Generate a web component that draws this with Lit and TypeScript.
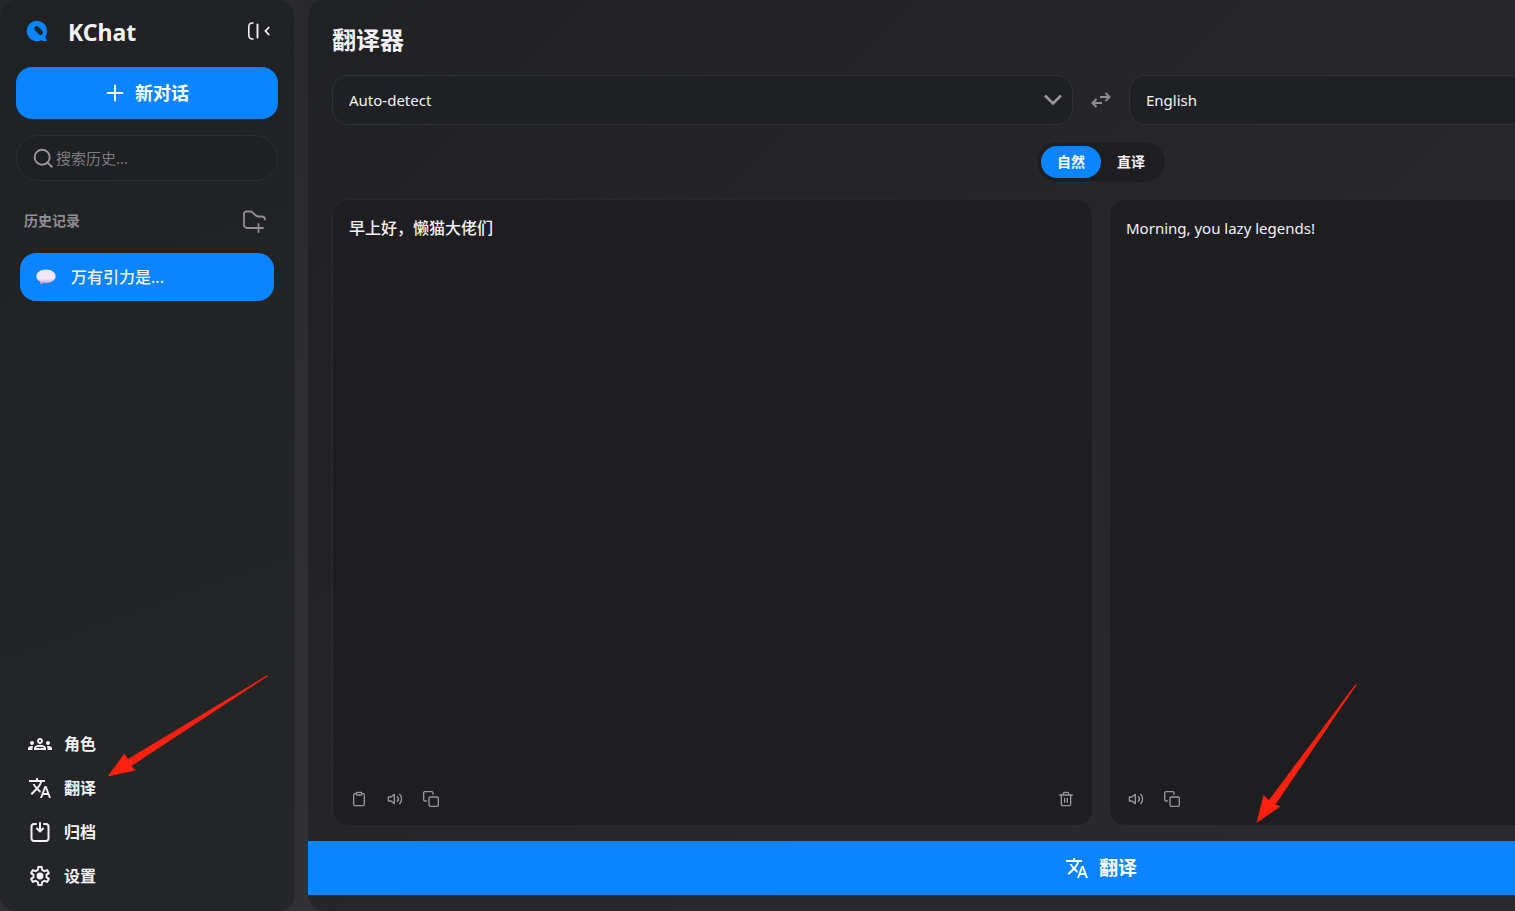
import { LitElement, html, css, svg, TemplateResult } from "lit";
import { customElement, property, state } from "lit/decorators.js";
import { classMap } from "lit/directives/class-map.js";

const line = (body: TemplateResult, size: number, width = 2) => html`
  <svg width=${size} height=${size} viewBox="0 0 24 24" fill="none" stroke="currentColor"
    stroke-width=${width} stroke-linecap="round" stroke-linejoin="round" aria-hidden="true">${body}</svg>`;

const solid = (body: TemplateResult, size: number) => html`
  <svg width=${size} height=${size} viewBox="0 0 24 24" fill="currentColor" aria-hidden="true">${body}</svg>`;

const icons = {
  logo: html`<svg width="22" height="22" viewBox="0 0 22 22" aria-hidden="true">
    <path fill="#0a84ff" d="M11 .8a10.200 10.200 0 1 0 4.300 19.400c1.800.9 3.700 1.100 5.400.6.500-.2.500-.8.100-1.100-.9-.8-1.400-2-1.300-3.400A10.200 10.200 0 0 0 11 .8Z"/>
    <path fill="none" stroke="#212224" stroke-width="4.600" stroke-linecap="round" d="M10.600 8.500l4 4"/></svg>`,
  collapse: html`<svg width="24" height="18" viewBox="0 0 24 18" fill="none" stroke="currentColor" stroke-width="1.600" stroke-linecap="round" aria-hidden="true">
    <path d="M6 1H5.500C3 1 1.800 2.500 1.800 5v8c0 2.500 1.200 4 3.700 4H6"/><path stroke-width="1.900" d="M10.500 2.500v13"/><path stroke-width="1.800" d="M21.700 5.500L18.500 9l3.200 3.500"/></svg>`,
  plus: line(svg`<path d="M12 3v18M3 12h18"/>`, 20, 2.2),
  search: line(svg`<circle cx="11" cy="11" r="9"/><path d="M17.500 17.500l5 5"/>`, 20, 2.3),
  folder: line(svg`<path d="M12.500 19H5a3 3 0 0 1-3-3V5a2.500 2.500 0 0 1 2.500-2.500h4.200c2.600 0 3.600 4.500 7.300 5h3.500c1.700 0 3.500.8 3.500 3M16.500 15v8M12.500 19h8.500"/>`, 24, 1.8),
  roles: solid(svg`<path d="M4 13c1.100 0 2-.9 2-2s-.9-2-2-2-2 .9-2 2 .9 2 2 2zm1.130 1.100c-.37-.06-.74-.1-1.130-.1-.99 0-1.930.21-2.780.58A2.010 2.010 0 0 0 0 16.430V18h4.500v-1.610c0-.83.23-1.610.63-2.290zM20 13c1.100 0 2-.9 2-2s-.9-2-2-2-2 .9-2 2 .9 2 2 2zm4 3.430c0-.81-.48-1.530-1.220-1.850a6.950 6.950 0 0 0-3.910-.48c.4.680.63 1.460.63 2.290V18H24v-1.570zm-7.760-2.780A10.500 10.500 0 0 0 12 12.750c-1.630 0-3.070.39-4.240.9A2.990 2.990 0 0 0 6 16.390V18h12v-1.610c0-1.180-.68-2.260-1.760-2.740zM8.070 16c.09-.23.13-.39.91-.69.97-.38 1.990-.56 3.020-.56s2.050.18 3.020.56c.77.3.81.46.91.69H8.070zM12 8c.55 0 1 .45 1 1s-.45 1-1 1-1-.45-1-1 .45-1 1-1m0-2c-1.660 0-3 1.340-3 3s1.340 3 3 3 3-1.340 3-3-1.340-3-3-3z"/>`, 24),
  translate: solid(svg`<path d="M12.870 15.070l-2.540-2.510.03-.03c1.740-1.940 2.980-4.170 3.710-6.530H17V4h-7V2H8v2H1v1.990h11.170C11.500 7.920 10.440 9.750 9 11.350 8.070 10.320 7.300 9.190 6.690 8h-2c.73 1.630 1.730 3.170 2.980 4.560l-5.090 5.020L4 19l5-5 3.110 3.110.76-2.040zM18.500 10h-2L12 22h2l1.120-3h4.750L21 22h2l-4.500-12zm-2.620 7l1.620-4.330L19.120 17h-3.240z"/>`, 24),
  archive: line(svg`<path d="M8 4H6a2.500 2.500 0 0 0-2.500 2.500v12A2.500 2.500 0 0 0 6 21h12a2.500 2.500 0 0 0 2.500-2.500v-12A2.500 2.500 0 0 0 18 4h-2M12 3v8M9 8.500l3 3 3-3"/>`, 24, 2),
  settings: html`<svg width="24" height="24" viewBox="0 0 24 24" fill="none" stroke="currentColor" stroke-width="2" stroke-linejoin="round" aria-hidden="true">
    <path d="M10.300 3h3.400l.5 3 2.100 1.200 2.800-1.100 1.700 3-2.300 1.800v2.200l2.300 1.800-1.700 3-2.800-1.100-2.100 1.200-.5 3h-3.400l-.5-3-2.100-1.200-2.800 1.100-1.700-3 2.300-1.800v-2.200L3.200 9.100l1.700-3 2.800 1.100 2.100-1.200Z"/><circle cx="12" cy="12" r="2.400" fill="currentColor"/></svg>`,
  swap: html`<svg width="22" height="18" viewBox="0 0 22 18" fill="none" stroke="currentColor" stroke-width="2" aria-hidden="true">
    <path d="M10 6h9.500M15.500 2l4 4-4 4M12 12H2.500M6.500 8l-4 4 4 4"/></svg>`,
  chevron: html`<svg width="20" height="12" viewBox="0 0 20 12" fill="none" stroke="currentColor" stroke-width="2.600" aria-hidden="true"><path d="M2 1.500l8 8 8-8"/></svg>`,
  paste: line(svg`<rect x="8" y="2" width="8" height="4" rx="1"/><path d="M16 4h2a2 2 0 0 1 2 2v14a2 2 0 0 1-2 2H6a2 2 0 0 1-2-2V6a2 2 0 0 1 2-2h2"/>`, 16, 2),
  speak: line(svg`<path d="M11 5L6 9H2v6h4l5 4zM15.500 8.500a5 5 0 0 1 0 7M19 5a10 10 0 0 1 0 14"/>`, 16, 2),
  copy: line(svg`<rect x="9" y="9" width="14" height="14" rx="2"/><path d="M5 15H3a2 2 0 0 1-2-2V3a2 2 0 0 1 2-2h10a2 2 0 0 1 2 2v2"/>`, 16, 2),
  trash: line(svg`<path d="M2.500 6h19M19 6v14a2 2 0 0 1-2 2H7a2 2 0 0 1-2-2V6M8 6V4a2 2 0 0 1 2-2h4a2 2 0 0 1 2 2v2M10 11v6M14 11v6"/>`, 16, 2),
  bubble: html`<svg width="20" height="16" viewBox="0 0 20 16" aria-hidden="true">
    <defs><linearGradient id="b" x1="0" y1="0" x2="0" y2="1"><stop offset="0" stop-color="#f0e4f6"/><stop offset=".6" stop-color="#f1e8f6"/><stop offset="1" stop-color="#b98bc4"/></linearGradient></defs>
    <path fill="url(#b)" d="M10 .5c5.400 0 9.600 2.900 9.600 6.700S15.400 14 10 14c-1 0-2-.1-3-.3-.4.900-1.400 1.600-3 1.900.5-.8.600-1.800.2-2.900C1.900 11.400.4 9.500.4 7.200.4 3.400 4.600.5 10 .5Z"/></svg>`,
};

const base = css`
  * { box-sizing: border-box; }
  button, select, input, textarea { font: inherit; color: inherit; margin: 0; border: 0; background: none; padding: 0; outline: none; }
  button { cursor: pointer; }
  svg { display: block; flex: none; }
`;

@customElement("chat-sidebar")
class ChatSidebar extends LitElement {
  static styles = [base, css`
    :host {
      box-sizing: border-box; display: flex; flex-direction: column; flex: none; width: 295px; padding: 0 16px 13px;
      border-right: 1px solid #2b2c2e; border-radius: 16px;
      background: linear-gradient(160deg, #202123, #252628);
    }
    .brand { display: flex; align-items: center; height: 67px; padding: 0 7px 6px 10px; }
    .brand h1 { margin: 0 auto 0 20px; padding-top: 3px; font-size: 23px; line-height: 32px; font-weight: 700; }
    .new {
      display: flex; align-items: center; justify-content: center; gap: 10px; height: 52px; flex: none;
      border-radius: 16px; background: #0a84ff; color: #fff; font-size: 18px; font-weight: 700;
    }
    .search {
      display: flex; align-items: center; gap: 3px; height: 46px; margin-top: 16px; padding: 0 16px; flex: none;
      border: 1px solid #2d2e30; border-radius: 23px; background: #1f2022; color: #98989d;
    }
    .search input { flex: 1; min-width: 0; font-size: 15px; }
    .search input::placeholder { color: #7c7c80; opacity: 1; }
    .heading { display: flex; align-items: center; justify-content: space-between; height: 48px; margin-top: 16px; padding: 0 12px 0 8px; color: #8e8e93; }
    .heading h2 { margin: 0; font-size: 14px; line-height: 20px; font-weight: 700; }
    .chat {
      display: flex; align-items: center; gap: 15px; height: 48px; margin: 8px 4px 0; padding: 0 16px;
      border-radius: 16px; background: #0a84ff; color: #f2f2f7; font-size: 16px; font-weight: 500; text-decoration: none;
    }
    nav { margin-top: auto; display: flex; flex-direction: column; }
    nav a { display: flex; align-items: center; gap: 12px; height: 44px; padding: 0 12px; color: #f2f2f7; font-size: 16px; font-weight: 700; text-decoration: none; }
  `];

  render() {
    const links: [TemplateResult, string][] = [
      [icons.roles, "角色"], [icons.translate, "翻译"], [icons.archive, "归档"], [icons.settings, "设置"],
    ];
    return html`
      <div class="brand">${icons.logo}<h1>KChat</h1><button aria-label="收起侧栏">${icons.collapse}</button></div>
      <button class="new">${icons.plus}新对话</button>
      <label class="search">${icons.search}<input type="text" aria-label="搜索历史" placeholder="搜索历史..." /></label>
      <div class="heading"><h2>历史记录</h2><button aria-label="新建文件夹">${icons.folder}</button></div>
      <a class="chat" href="#chat">${icons.bubble}<span>万有引力是...</span></a>
      <nav>${links.map(([icon, label]) => html`<a href="#">${icon}<span>${label}</span></a>`)}</nav>`;
  }
}

@customElement("language-select")
class LanguageSelect extends LitElement {
  @property({ type: Array }) options: string[] = [];
  @property() label = "";
  static styles = [base, css`
    :host { flex: 1; min-width: 0; }
    .box { display: grid; grid-template-columns: 1fr auto; align-items: center; height: 50px; border: 1px solid #303133; border-radius: 16px; background: #1f2023; }
    select { grid-area: 1 / 1 / 2 / 3; height: 48px; padding: 0 48px 0 16px; appearance: none; font-size: 15px; border-radius: 16px; }
    option { background: #1f2023; }
    svg { grid-area: 1 / 2; margin-right: 9px; color: #98989d; pointer-events: none; }
  `];
  render() {
    return html`<div class="box">
      <select aria-label=${this.label}>${this.options.map((o) => html`<option>${o}</option>`)}</select>
      ${icons.chevron}</div>`;
  }
}

@customElement("text-panel")
class TextPanel extends LitElement {
  @property() text = "";
  @property() label = "";
  @property({ type: Boolean }) source = false;
  static styles = [base, css`
    :host { display: flex; flex-direction: column; flex: 1; min-width: 0; border: 1px solid #29292b; border-radius: 16px; background: #1e1e20; }
    textarea { flex: 1; resize: none; padding: 16px 16px 0; font-size: 15px; line-height: 24px; }
    .source { font-size: 16px; font-weight: 500; }
    .tools { display: flex; align-items: center; gap: 4px; padding: 0 10px 10px; color: #98989d; }
    .tools button { display: grid; place-items: center; width: 32px; height: 32px; }
    .end { margin-left: auto; }
  `];
  render() {
    return html`
      <textarea class=${classMap({ source: this.source })} aria-label=${this.label} spellcheck="false" ?readonly=${!this.source} .value=${this.text}></textarea>
      <div class="tools">
        ${this.source ? html`<button aria-label="粘贴">${icons.paste}</button>` : ""}
        <button aria-label="朗读">${icons.speak}</button>
        <button aria-label="复制">${icons.copy}</button>
        ${this.source ? html`<button class="end" aria-label="清空">${icons.trash}</button>` : ""}
      </div>`;
  }
}

@customElement("translator-view")
class TranslatorView extends LitElement {
  @state() mode = "自然";
  static styles = [base, css`
    :host {
      box-sizing: border-box; display: flex; flex-direction: column; flex: 1 0 auto; min-width: 1586px; padding: 24px 0 16px;
      border-radius: 16px; background: linear-gradient(135deg, #202123, #29292c 60%, #2b2b2e);
    }
    h2 { margin: 0 24px 19px; font-size: 24px; line-height: 32px; font-weight: 700; }
    .languages { display: flex; align-items: center; margin: 0 24px; }
    .swap { display: grid; place-items: center; width: 56px; height: 40px; color: #8e8e93; }
    .modes { display: flex; align-self: center; margin: 16px 0; padding: 4px; height: 42px; border: 1px solid #2a2a2c; border-radius: 21px; background: #1e1e20; }
    .modes button { padding: 0 16px; border-radius: 16px; font-size: 14px; font-weight: 700; }
    .modes .on { background: #0a84ff; color: #fff; }
    .panels { display: flex; gap: 16px; flex: 1; margin: 0 24px 15px; }
    .submit { display: flex; align-items: center; justify-content: center; gap: 10px; height: 54px; background: #0a84ff; color: #fff; font-size: 19px; font-weight: 700; }
  `];
  render() {
    return html`
      <h2>翻译器</h2>
      <div class="languages">
        <language-select label="源语言" .options=${["Auto-detect", "English", "中文"]}></language-select>
        <button class="swap" aria-label="交换语言">${icons.swap}</button>
        <language-select label="目标语言" .options=${["English", "中文"]}></language-select>
      </div>
      <div class="modes">
        ${["自然", "直译"].map((m) => html`
          <button class=${classMap({ on: m === this.mode })} @click=${() => (this.mode = m)}>${m}</button>`)}
      </div>
      <div class="panels">
        <text-panel source label="原文" text="早上好，懒猫大佬们"></text-panel>
        <text-panel label="译文" text="Morning, you lazy legends!"></text-panel>
      </div>
      <button class="submit">${icons.translate}翻译</button>`;
  }
}

@customElement("app-root")
class AppRoot extends LitElement {
  static styles = [base, css`
    :host {
      display: flex; gap: 13px; position: relative; height: 100vh; overflow: hidden;
      background: linear-gradient(150deg, #27282a, #323234 60%); color: #f2f2f7;
      font-family: "Noto Sans", "Noto Sans CJK SC", sans-serif; font-size: 16px; line-height: 24px;
    }
    .arrow { position: absolute; pointer-events: none; }
    .to-nav { left: 107px; bottom: 134px; }
    .to-submit { left: 1256px; bottom: 87px; }
  `];
  render() {
    return html`
      <chat-sidebar></chat-sidebar>
      <translator-view></translator-view>
      <svg class="arrow to-nav" width="162" height="102" viewBox="0 0 162 102" aria-hidden="true">
        <path fill="#ff2010" d="M.5 101.500L17.500 78.500L21 84L160 .3L160.700 1.300L24.500 91L28.500 95.500Z"/></svg>
      <svg class="arrow to-submit" width="101" height="140" viewBox="0 0 101 140" aria-hidden="true">
        <path fill="#ff2010" d="M.5 139L7.500 111L13 116L99.500 .3L100.500 1L19.500 120.500L24.500 122.500Z"/></svg>`;
  }
}
